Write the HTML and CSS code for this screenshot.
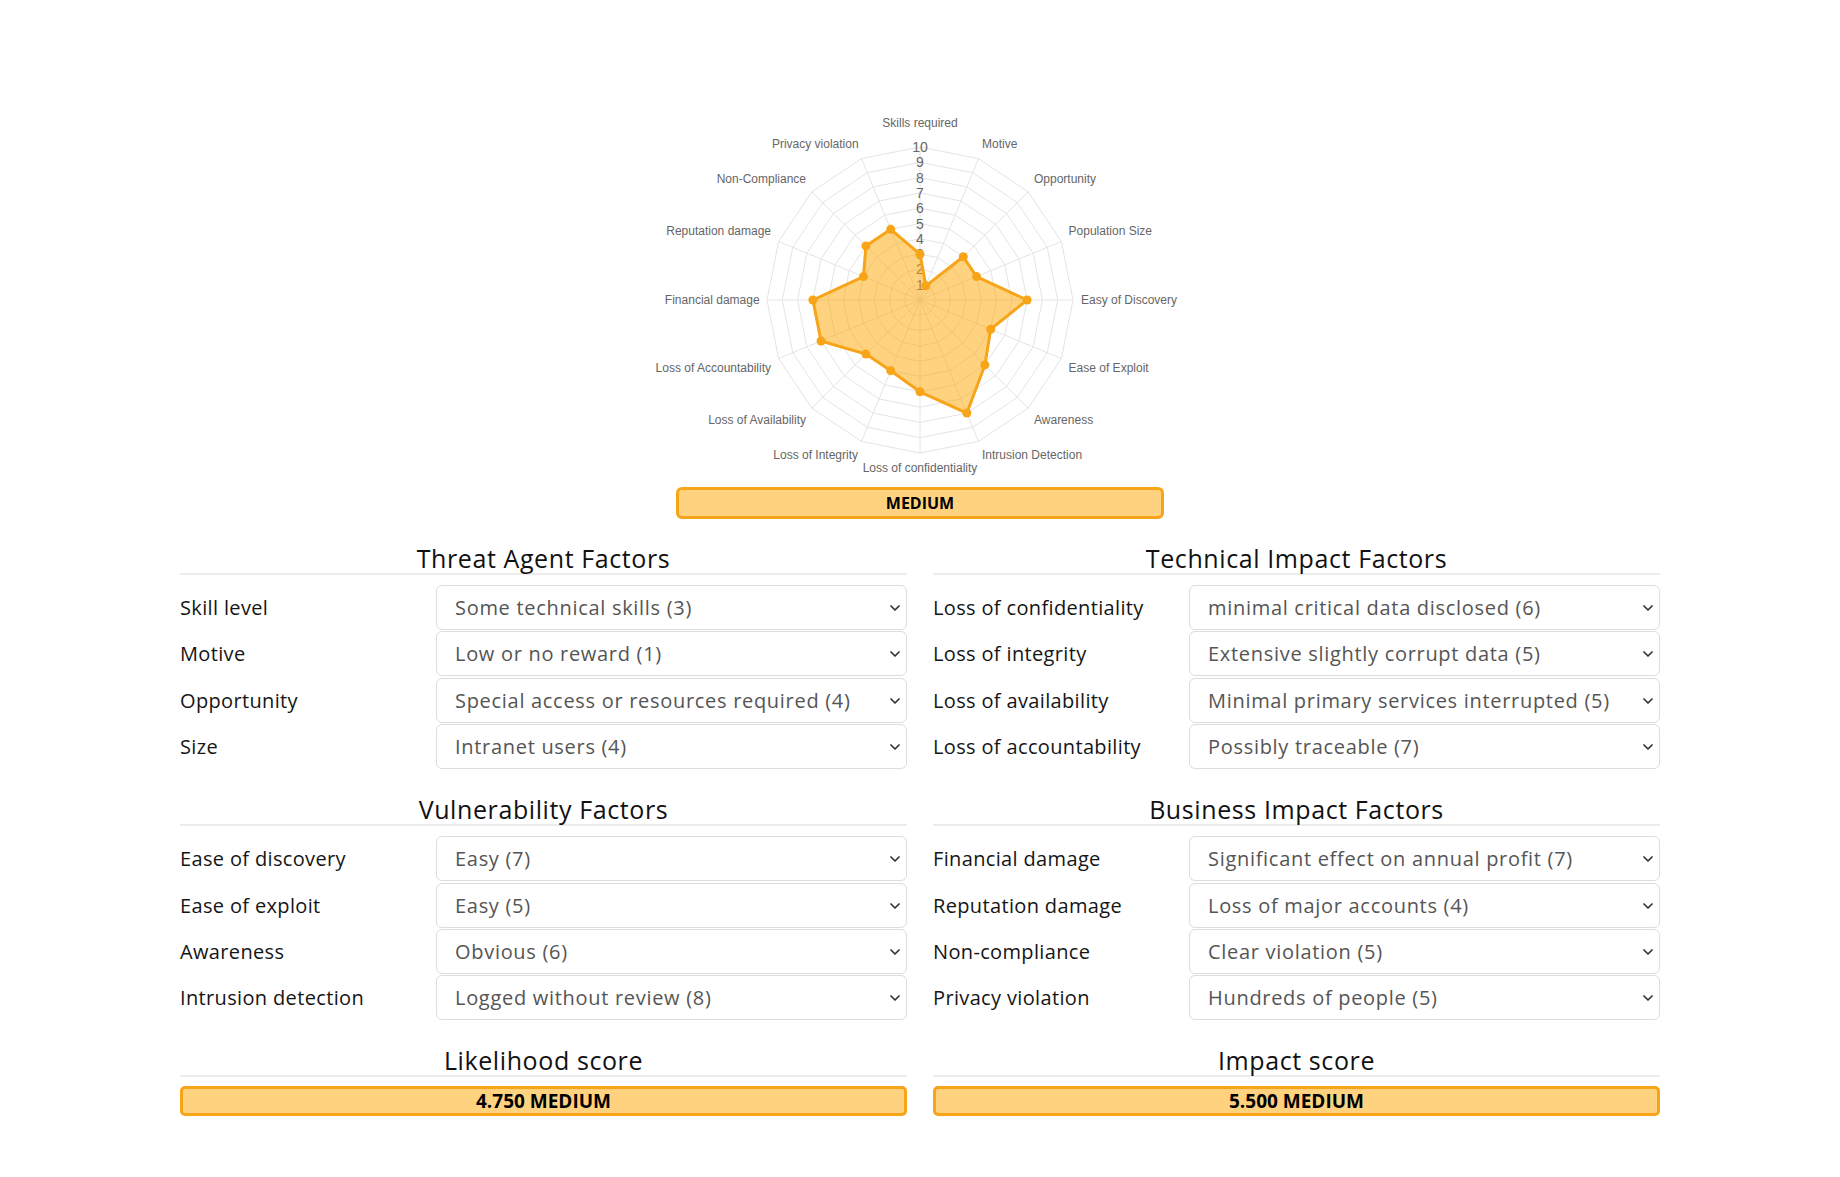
FILE: index.html
```html
<!DOCTYPE html>
<html lang="en">
<head>
<meta charset="utf-8">
<title>OWASP Risk Rating</title>
<link rel="stylesheet" href="styles.css">
</head>
<body>
<div class="page">
  <div class="chart">
    <svg class="radar" width="560" height="380" viewBox="0 0 560 380">
      <defs>
        <polygon id="ring" points="0,-1 .3827,-.9239 .7071,-.7071 .9239,-.3827 1,0 .9239,.3827 .7071,.7071 .3827,.9239 0,1 -.3827,.9239 -.7071,.7071 -.9239,.3827 -1,0 -.9239,-.3827 -.7071,-.7071 -.3827,-.9239" fill="none" stroke="#e4e4e4" stroke-width="1" vector-effect="non-scaling-stroke"/>
        <path id="spokes" d="M0 0L0 -1M0 0L.3827 -.9239M0 0L.7071 -.7071M0 0L.9239 -.3827M0 0L1 0M0 0L.9239 .3827M0 0L.7071 .7071M0 0L.3827 .9239M0 0L0 1M0 0L-.3827 .9239M0 0L-.7071 .7071M0 0L-.9239 .3827M0 0L-1 0M0 0L-.9239 -.3827M0 0L-.7071 -.7071M0 0L-.3827 -.9239" fill="none" stroke="#e4e4e4" stroke-width="1" vector-effect="non-scaling-stroke"/>
      </defs>
      <g transform="translate(280 200)">
        <use href="#spokes" transform="scale(153)"/>
        <use href="#ring" transform="scale(15.3)"/>
        <use href="#ring" transform="scale(30.6)"/>
        <use href="#ring" transform="scale(45.9)"/>
        <use href="#ring" transform="scale(61.2)"/>
        <use href="#ring" transform="scale(76.5)"/>
        <use href="#ring" transform="scale(91.8)"/>
        <use href="#ring" transform="scale(107.1)"/>
        <use href="#ring" transform="scale(122.4)"/>
        <use href="#ring" transform="scale(137.7)"/>
        <use href="#ring" transform="scale(153)"/>
        <g class="ticks">
          <text x="0" y="-15.3">1</text>
          <text x="0" y="-30.6">2</text>
          <text x="0" y="-45.9">3</text>
          <text x="0" y="-61.2">4</text>
          <text x="0" y="-76.5">5</text>
          <text x="0" y="-91.8">6</text>
          <text x="0" y="-107.1">7</text>
          <text x="0" y="-122.4">8</text>
          <text x="0" y="-137.7">9</text>
          <text x="0" y="-153">10</text>
        </g>
        <polygon class="area" points="0,-45.9 5.86,-14.14 43.28,-43.28 56.54,-23.42 107.1,0 70.68,29.28 64.91,64.91 46.84,113.08 0,91.8 -29.28,70.68 -54.09,54.09 -98.95,40.99 -107.1,0 -56.54,-23.42 -54.09,-54.09 -29.28,-70.68"/>
        <g class="dots">
          <circle cx="0" cy="-45.9" r="4.5"/>
          <circle cx="5.86" cy="-14.14" r="4.5"/>
          <circle cx="43.28" cy="-43.28" r="4.5"/>
          <circle cx="56.54" cy="-23.42" r="4.5"/>
          <circle cx="107.1" cy="0" r="4.5"/>
          <circle cx="70.68" cy="29.28" r="4.5"/>
          <circle cx="64.91" cy="64.91" r="4.5"/>
          <circle cx="46.84" cy="113.08" r="4.5"/>
          <circle cx="0" cy="91.8" r="4.5"/>
          <circle cx="-29.28" cy="70.68" r="4.5"/>
          <circle cx="-54.09" cy="54.09" r="4.5"/>
          <circle cx="-98.95" cy="40.99" r="4.5"/>
          <circle cx="-107.1" cy="0" r="4.5"/>
          <circle cx="-56.54" cy="-23.42" r="4.5"/>
          <circle cx="-54.09" cy="-54.09" r="4.5"/>
          <circle cx="-29.28" cy="-70.68" r="4.5"/>
        </g>
      </g>
      <g class="axis-labels">
        <text x="280" y="22.7" text-anchor="middle">Skills required</text>
        <text x="342" y="44">Motive</text>
        <text x="394" y="79">Opportunity</text>
        <text x="428.6" y="130.7">Population Size</text>
        <text x="441" y="200">Easy of Discovery</text>
        <text x="428.6" y="267.7">Ease of Exploit</text>
        <text x="394" y="320">Awareness</text>
        <text x="342" y="355">Intrusion Detection</text>
        <text x="280" y="367.7" text-anchor="middle">Loss of confidentiality</text>
        <text x="218" y="355" text-anchor="end">Loss of Integrity</text>
        <text x="166" y="320" text-anchor="end">Loss of Availability</text>
        <text x="131" y="267.7" text-anchor="end">Loss of Accountability</text>
        <text x="119.6" y="200" text-anchor="end">Financial damage</text>
        <text x="131" y="130.7" text-anchor="end">Reputation damage</text>
        <text x="166" y="79" text-anchor="end">Non-Compliance</text>
        <text x="218.6" y="44" text-anchor="end">Privacy violation</text>
      </g>
    </svg>
  </div>

  <div class="risk-badge">MEDIUM</div>

  <div class="factors">
    <section class="block">
      <h2 class="block-title">Threat Agent Factors</h2>
      <div class="rows">
        <div class="row"><span class="label">Skill level</span><div class="select-wrap"><select class="select"><option>Some technical skills (3)</option></select><svg class="chev" width="10" height="6" viewBox="0 0 10 6"><path d="M1 1l4 4l4 -4"/></svg></div></div>
        <div class="row"><span class="label">Motive</span><div class="select-wrap"><select class="select"><option>Low or no reward (1)</option></select><svg class="chev" width="10" height="6" viewBox="0 0 10 6"><path d="M1 1l4 4l4 -4"/></svg></div></div>
        <div class="row"><span class="label">Opportunity</span><div class="select-wrap"><select class="select"><option>Special access or resources required (4)</option></select><svg class="chev" width="10" height="6" viewBox="0 0 10 6"><path d="M1 1l4 4l4 -4"/></svg></div></div>
        <div class="row"><span class="label">Size</span><div class="select-wrap"><select class="select"><option>Intranet users (4)</option></select><svg class="chev" width="10" height="6" viewBox="0 0 10 6"><path d="M1 1l4 4l4 -4"/></svg></div></div>
      </div>
    </section>

    <section class="block">
      <h2 class="block-title">Technical Impact Factors</h2>
      <div class="rows">
        <div class="row"><span class="label">Loss of confidentiality</span><div class="select-wrap"><select class="select"><option>minimal critical data disclosed (6)</option></select><svg class="chev" width="10" height="6" viewBox="0 0 10 6"><path d="M1 1l4 4l4 -4"/></svg></div></div>
        <div class="row"><span class="label">Loss of integrity</span><div class="select-wrap"><select class="select"><option>Extensive slightly corrupt data (5)</option></select><svg class="chev" width="10" height="6" viewBox="0 0 10 6"><path d="M1 1l4 4l4 -4"/></svg></div></div>
        <div class="row"><span class="label">Loss of availability</span><div class="select-wrap"><select class="select"><option>Minimal primary services interrupted (5)</option></select><svg class="chev" width="10" height="6" viewBox="0 0 10 6"><path d="M1 1l4 4l4 -4"/></svg></div></div>
        <div class="row"><span class="label">Loss of accountability</span><div class="select-wrap"><select class="select"><option>Possibly traceable (7)</option></select><svg class="chev" width="10" height="6" viewBox="0 0 10 6"><path d="M1 1l4 4l4 -4"/></svg></div></div>
      </div>
    </section>

    <section class="block">
      <h2 class="block-title">Vulnerability Factors</h2>
      <div class="rows">
        <div class="row"><span class="label">Ease of discovery</span><div class="select-wrap"><select class="select"><option>Easy (7)</option></select><svg class="chev" width="10" height="6" viewBox="0 0 10 6"><path d="M1 1l4 4l4 -4"/></svg></div></div>
        <div class="row"><span class="label">Ease of exploit</span><div class="select-wrap"><select class="select"><option>Easy (5)</option></select><svg class="chev" width="10" height="6" viewBox="0 0 10 6"><path d="M1 1l4 4l4 -4"/></svg></div></div>
        <div class="row"><span class="label">Awareness</span><div class="select-wrap"><select class="select"><option>Obvious (6)</option></select><svg class="chev" width="10" height="6" viewBox="0 0 10 6"><path d="M1 1l4 4l4 -4"/></svg></div></div>
        <div class="row"><span class="label">Intrusion detection</span><div class="select-wrap"><select class="select"><option>Logged without review (8)</option></select><svg class="chev" width="10" height="6" viewBox="0 0 10 6"><path d="M1 1l4 4l4 -4"/></svg></div></div>
      </div>
    </section>

    <section class="block">
      <h2 class="block-title">Business Impact Factors</h2>
      <div class="rows">
        <div class="row"><span class="label">Financial damage</span><div class="select-wrap"><select class="select"><option>Significant effect on annual profit (7)</option></select><svg class="chev" width="10" height="6" viewBox="0 0 10 6"><path d="M1 1l4 4l4 -4"/></svg></div></div>
        <div class="row"><span class="label">Reputation damage</span><div class="select-wrap"><select class="select"><option>Loss of major accounts (4)</option></select><svg class="chev" width="10" height="6" viewBox="0 0 10 6"><path d="M1 1l4 4l4 -4"/></svg></div></div>
        <div class="row"><span class="label">Non-compliance</span><div class="select-wrap"><select class="select"><option>Clear violation (5)</option></select><svg class="chev" width="10" height="6" viewBox="0 0 10 6"><path d="M1 1l4 4l4 -4"/></svg></div></div>
        <div class="row"><span class="label">Privacy violation</span><div class="select-wrap"><select class="select"><option>Hundreds of people (5)</option></select><svg class="chev" width="10" height="6" viewBox="0 0 10 6"><path d="M1 1l4 4l4 -4"/></svg></div></div>
      </div>
    </section>

    <section class="block">
      <h2 class="block-title">Likelihood score</h2>
      <div class="score">4.750 MEDIUM</div>
    </section>

    <section class="block">
      <h2 class="block-title">Impact score</h2>
      <div class="score">5.500 MEDIUM</div>
    </section>
  </div>
</div>
</body>
</html>
```

FILE: styles.css
```css
* { box-sizing: border-box; }

html, body {
  margin: 0;
  padding: 0;
  background: #ffffff;
}

body {
  font-family: "Open Sans", "Noto Sans", Arial, sans-serif;
  color: #151515;
}

.page {
  width: 1480px;
  margin: 0 auto;
  padding-top: 100px;
  padding-bottom: 40px;
}

.chart {
  display: flex;
  justify-content: center;
}

.radar {
  display: block;
}

.radar .ticks text {
  font-family: "Liberation Sans", Arial, sans-serif;
  font-size: 14px;
  fill: #666666;
  text-anchor: middle;
  dominant-baseline: central;
}

.radar .axis-labels text {
  font-family: "Liberation Sans", Arial, sans-serif;
  font-size: 12px;
  fill: #666666;
  dominant-baseline: central;
}

.radar .area {
  fill: rgba(255, 165, 0, 0.5);
  stroke: #f7a418;
  stroke-width: 3;
  stroke-linejoin: round;
}

.radar .dots circle {
  fill: #f7a418;
}

.risk-badge {
  width: 488px;
  height: 32px;
  margin: 7px auto 0;
  border: 3px solid #f7a418;
  border-radius: 6px;
  background: #ffd27f;
  display: flex;
  align-items: center;
  justify-content: center;
  font-size: 16px;
  font-weight: 700;
  color: #000;
}

.factors {
  margin-top: 25px;
  display: grid;
  grid-template-columns: 727px 727px;
  column-gap: 26px;
  row-gap: 26px;
}

.block-title {
  margin: 0;
  font-size: 25px;
  font-weight: 500;
  letter-spacing: 0.6px;
  line-height: 29px;
  text-align: center;
  color: #111;
  border-bottom: 2px solid #ececec;
}

.rows {
  margin-top: 10px;
  display: flex;
  flex-direction: column;
  gap: 1.4px;
}

.row {
  display: grid;
  grid-template-columns: 256px 1fr;
  align-items: center;
  height: 45px;
}

.label {
  font-size: 20px;
  letter-spacing: 0.35px;
  color: #151515;
}

.select-wrap {
  position: relative;
  height: 45px;
}

.select {
  appearance: none;
  -webkit-appearance: none;
  width: 100%;
  height: 45px;
  margin: 0;
  padding: 0 30px 0 18px;
  border: 1px solid #dddddd;
  border-radius: 6px;
  background: #ffffff;
  font-family: "Open Sans", "Noto Sans", Arial, sans-serif;
  font-size: 20px;
  letter-spacing: 0.7px;
  color: #555555;
}

.chev {
  position: absolute;
  right: 7px;
  top: 20px;
  fill: none;
  stroke: #333;
  stroke-width: 1.7;
  stroke-linecap: round;
  stroke-linejoin: round;
}

.score {
  margin-top: 9px;
  height: 30px;
  border: 3px solid #f7a418;
  border-radius: 5px;
  background: #ffd27f;
  display: flex;
  align-items: center;
  justify-content: center;
  font-size: 19px;
  font-weight: 700;
  color: #000;
}
```
